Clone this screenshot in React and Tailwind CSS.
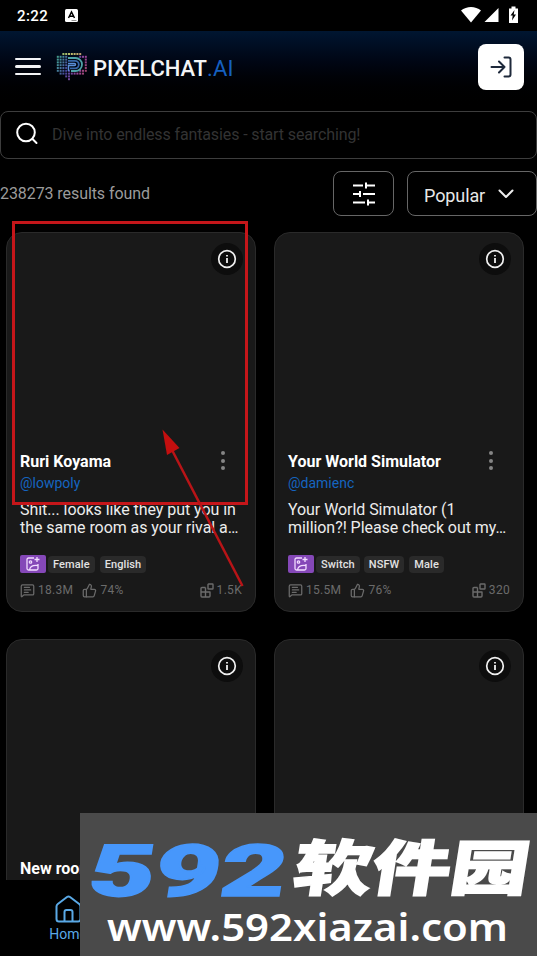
import { MessageSquareText, ThumbsUp } from "lucide-react";

const characters = [
	{
		name: "Ruri Koyama",
		author: "@lowpoly",
		lines: ["Shit... looks like they put you in", "the same room as your rival a…"],
		tags: ["Female", "English"],
		chats: "18.3M",
		likes: "74%",
		blocks: "1.5K",
	},
	{
		name: "Your World Simulator",
		author: "@damienc",
		lines: ["Your World Simulator (1", "million?! Please check out my…"],
		tags: ["Switch", "NSFW", "Male"],
		chats: "15.5M",
		likes: "76%",
		blocks: "320",
	},
	{ name: "New room" },
	{ name: "" },
];

const logoRows = [
	"..1111111..",
	"1111....111",
	"1111......1",
	"1111......1",
	"1111......1",
	"1111......1",
	"11111...111",
	".111111111.",
	"...11......",
	"....1......",
];

const LogoMark = () => (
	<svg className="w-8 h-8 shrink-0" viewBox="0 0 32 32">
		{logoRows.map((row, y) =>
			row.split("").map((cell, x) =>
				cell === "1" ? (
					<rect
						key={`${x}-${y}`}
						x={0.8 + x * 2.8}
						y={2 + y * 2.8}
						width="2"
						height="2"
						fill={`hsl(${y === 0 ? 100 - x * 8 : 165 + x * 13 + y * 6} 38% ${y === 0 ? 58 : 44}%)`}
					/>
				) : null
			)
		)}
		<path d="M12 7h7.500a6.500 6.500 0 0 1 0 13H15" fill="none" stroke="#4fa3a8" strokeWidth="1.800" />
		<path d="M12 9.800h7a3.800 3.800 0 0 1 0 7.600h-5" fill="none" stroke="#3767a8" strokeWidth="1.800" />
		<path d="M12 12.600h6.500a1 1 0 0 1 0 2H12.500V20" fill="none" stroke="#5a8fd8" strokeWidth="1.500" />
	</svg>
);

const StatusBar = () => (
	<div className="h-[31px] pl-[17px] pr-[18px] flex items-center bg-black text-white">
		<span className="text-[15px] font-medium leading-none tracking-[0.4px] w-[48px] mt-0.5">2:22</span>
		<svg className="w-[13px] h-[13px]" viewBox="0 0 13 13">
			<rect width="13" height="13" rx="1.500" fill="#fff" />
			<path d="M3.500 9 6.500 3l3 6M4.500 7.200h4" fill="none" stroke="#000" strokeWidth="1.500" />
			<path d="M6.500 11.500h5" stroke="#777" strokeWidth="0.800" />
		</svg>
		<svg className="ml-auto w-[58px] h-[17px] mb-0.5" viewBox="0 0 58 17" fill="#fff">
			<path d="M0 4.500C5.500-.3 14.500-.3 20 4.500L10 16.500Z" />
			<path d="M37.500 2v14H23.500Z" />
			<path d="M48 2.500h2.500V.5h4v2H57V17h-9Z" />
			<path d="m53.500 4-4 5.500h2.200L51 14.500l4-6h-2.300Z" fill="#000" />
		</svg>
	</div>
);

const Header = () => (
	<header className="h-[79px] pl-[15px] pr-[13px] pb-[7px] flex items-center bg-gradient-to-b from-[#001631] to-black">
		<div className="w-[26px] flex flex-col gap-[5px] mr-[15px] mb-px">
			<span className="h-[2.500px] rounded bg-gray-100" />
			<span className="h-[2.500px] rounded bg-gray-100" />
			<span className="h-[2.500px] rounded bg-gray-100" />
		</div>
		<LogoMark />
		<div className="ml-[5px] mt-[3px] text-[22px] leading-none whitespace-nowrap">
			<span className="font-medium text-gray-100 tracking-[-0.1px]">PIXELCHAT</span>
			<span className="text-[#1560c0] tracking-[0.2px]">.AI</span>
		</div>
		<button className="ml-auto size-[46px] rounded-lg bg-white flex items-center justify-center">
			<svg className="size-6 mr-px" viewBox="0 0 24 24" fill="none" stroke="#1e293b" strokeWidth="2" strokeLinejoin="round" strokeLinecap="round">
				<path d="M2.500 12h13M10 6.500 15.500 12 10 17.500M15.500 2.500h4a2 2 0 0 1 2 2v15a2 2 0 0 1-2 2h-4" />
			</svg>
		</button>
	</header>
);

const SearchBar = () => (
	<div className="mt-px h-12 rounded-lg border border-[#3d3d3d] pl-[15px] flex items-center">
		<svg className="size-[23px] -mt-1" viewBox="0 0 23 23" fill="none" stroke="#fff" strokeWidth="2" strokeLinecap="round">
			<circle cx="10" cy="10.500" r="8.800" />
			<path d="m16.500 17 4 4" />
		</svg>
		<span className="ml-[13px] text-[16px] tracking-[-0.12px] text-[#333] whitespace-nowrap">
			Dive into endless fantasies - start searching!
		</span>
	</div>
);

const Toolbar = () => (
	<div className="mt-3 h-[45px] flex items-center">
		<span className="text-[16px] tracking-[-0.08px] text-[#9b9b9b]">238273 results found</span>
		<button className="ml-auto w-[61px] h-[45px] rounded-lg border border-[#666] flex items-center justify-center">
			<svg className="w-[22px] h-6" viewBox="0 0 22 24" fill="none" stroke="#fff" strokeWidth="2">
				<path d="M0 3.500h10M13 .5v6M13 3.500h9M0 12h7M7 9v6M10 12h12M0 20.500h12M15 17.500v6M15 20.500h7" />
			</svg>
		</button>
		<button className="ml-[13px] w-[130px] h-[45px] rounded-lg border border-[#666] pl-4 pt-1 flex items-center text-[18px] text-[#e8e8e8]">
			<span className="tracking-[-0.1px]">Popular</span>
			<svg className="ml-[13px] mb-1 w-4 h-[10px]" viewBox="0 0 16 10" fill="none" stroke="#eee" strokeWidth="2" strokeLinecap="round" strokeLinejoin="round">
				<path d="m1.500 1.500 6.500 6.500 6.500-6.500" />
			</svg>
		</button>
	</div>
);

const InfoIcon = () => (
	<div className="size-8 rounded-full bg-[#0d0d0d] flex items-center justify-center">
		<svg className="size-5" viewBox="0 0 20 20" fill="none" stroke="#f0f0f0">
			<circle cx="10" cy="10" r="8.300" strokeWidth="1.700" />
			<path d="M10 9v5M10 6v1.500" strokeWidth="1.800" />
		</svg>
	</div>
);

const ImageBadge = () => (
	<span className="w-[26px] h-[18px] rounded-xs bg-[#8548b8] flex items-center justify-center -mr-0.5">
		<svg className="size-[14px]" viewBox="0 0 14 14" fill="none" stroke="#f2dcff" strokeWidth="1.300">
			<path d="M8 1H2.500A1.500 1.500 0 0 0 1 2.500v9A1.500 1.500 0 0 0 2.500 13h8a1.500 1.500 0 0 0 1.500-1.500V7M3.500 13c.5-4 4-5 8.500-4.500M11 0v5M8.500 2.500h5" />
			<circle cx="4.500" cy="5" r="1.200" />
		</svg>
	</span>
);

const BlocksIcon = () => (
	<svg className="w-[14px] h-[15px]" viewBox="0 0 14 15" fill="none" stroke="currentColor" strokeWidth="1.400" strokeLinejoin="round">
		<path d="M5.500 4.500H2a1 1 0 0 0-1 1V13a1 1 0 0 0 1 1h7a1 1 0 0 0 1-1V9H1M5.500 4.500V14" />
		<rect x="8" y="1" width="5" height="5" rx="0.500" />
	</svg>
);

const CharacterCard = ({ name, author, lines, tags, chats, likes, blocks }) => (
	<div className="h-[380px] rounded-2xl border border-[#2a2a2a] bg-[#191919] px-[13px] flex flex-col">
		<div className="h-[219px] pt-[10px] -mr-px flex justify-end">
			<InfoIcon />
		</div>
		<div className="flex justify-between h-[19px]">
			<h3 className="text-[16px] leading-[19px] font-bold text-white whitespace-nowrap">{name}</h3>
			{author && (
				<div className="mr-[17px] -mt-px h-[19px] flex flex-col justify-between">
					<span className="size-1 rounded-full bg-[#858585]" />
					<span className="size-1 rounded-full bg-[#858585]" />
					<span className="size-1 rounded-full bg-[#858585]" />
				</div>
			)}
		</div>
		{author && (
			<>
				<p className="mt-[3px] text-[14px] leading-[18px] text-[#1565c0]">{author}</p>
				<div className="mt-[9px] text-[16px] leading-[18px] tracking-[-0.06px] text-[#ececec] whitespace-nowrap">
					{lines.map((line) => (
						<p key={line}>{line}</p>
					))}
				</div>
				<div className="mt-[18px] h-[18px] flex items-center gap-1">
					<ImageBadge />
					{tags.map((tag) => (
						<span key={tag} className="mt-px h-[17px] px-[5px] rounded bg-[#2a2a2a] text-[11px] leading-[17px] font-medium tracking-[0.1px] text-[#e2e2e2] last:ml-px">
							{tag}
						</span>
					))}
				</div>
				<div className="mt-[9px] h-4 flex items-center text-[12px] tracking-[0.3px] text-[#6b6b6b]">
					<MessageSquareText className="size-[15px] mr-[3px]" />
					{chats}
					<ThumbsUp className="size-[15px] ml-[9px] mr-[3px]" />
					{likes}
					<span className="ml-auto flex items-center gap-[3px]">
						<BlocksIcon />
						{blocks}
					</span>
				</div>
			</>
		)}
	</div>
);

const BottomNav = () => (
	<nav className="h-[76px] bg-black flex">
		<div className="w-[136px] pt-[15px] flex flex-col items-center text-[#5aa9e6]">
			<svg className="w-[27px] h-[28px]" viewBox="0 0 27 28" fill="none" stroke="currentColor" strokeWidth="2" strokeLinejoin="round" strokeLinecap="round">
				<path d="M1.500 11.500Q1.500 10 2.800 9L12 2q1.500-1 3 0l9.200 7q1.300 1 1.300 2.500V24a2.500 2.500 0 0 1-2.500 2.500H4A2.500 2.500 0 0 1 1.500 24Z" />
				<path d="M9.500 26v-9a2 2 0 0 1 2-2h4a2 2 0 0 1 2 2v9" />
			</svg>
			<span className="mt-[2px] text-[14px] leading-[18px]">Home</span>
		</div>
	</nav>
);

const Highlight = () => (
	<svg className="absolute left-0 top-[215px] w-[260px] h-[380px]" viewBox="0 215 260 380">
		<rect x="13.500" y="222.500" width="233" height="281" fill="none" stroke="#c5161a" strokeWidth="3" />
		<path d="M242.500 586 172 450" stroke="#b81417" strokeWidth="2.500" />
		<path d="M162.500 429.500 179.500 448 167 455Z" fill="#c40f0f" />
	</svg>
);

const Watermark = () => (
	<svg className="absolute left-20 top-[813px] w-[457px] h-[143px] bg-[#4a4a4a]" viewBox="0 0 457 143">
		<g transform="translate(6 83) skewX(-9)">
			<text
				fontFamily="Roboto, sans-serif"
				fontWeight="900"
				fontSize="72"
				fill="#4797fb"
				stroke="#4797fb"
				strokeWidth="1.500"
				textLength="197"
				lengthAdjust="spacingAndGlyphs"
			>
				592
			</text>
		</g>
		<g transform="translate(211 77) skewX(-9)">
			<text
				fontFamily="'Noto Sans CJK SC', sans-serif"
				fontWeight="900"
				fontSize="60"
				fill="#fff"
				stroke="#fff"
				strokeWidth="1.500"
				textLength="235"
				lengthAdjust="spacingAndGlyphs"
			>
				软件园
			</text>
		</g>
		<text
			x="27"
			y="127.500"
			fontFamily="'Noto Sans', sans-serif"
			fontWeight="600"
			fontSize="38"
			fill="#fff"
			textLength="401"
			lengthAdjust="spacingAndGlyphs"
		>
			www.592xiazai.com
		</text>
	</svg>
);

export default function App() {
	return (
		<div className="relative w-[537px] h-[956px] overflow-hidden bg-black font-['Roboto',sans-serif] flex flex-col">
			<StatusBar />
			<Header />
			<SearchBar />
			<Toolbar />
			<main className="mt-4 flex-1 min-h-0 overflow-hidden pl-1.5 pr-[13px]">
				<div className="grid grid-cols-[250px_250px] justify-between gap-y-[27px]">
					{characters.map((character, i) => (
						<CharacterCard key={i} {...character} />
					))}
				</div>
			</main>
			<BottomNav />
			<Highlight />
			<Watermark />
		</div>
	);
}
